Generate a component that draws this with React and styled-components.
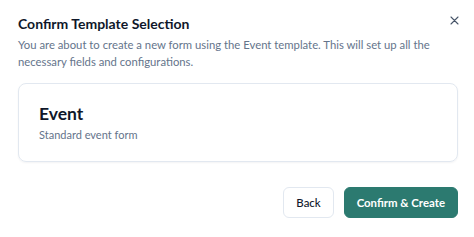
import React from 'react';
import styled, { createGlobalStyle } from 'styled-components';

const GlobalStyle = createGlobalStyle`
  body {
    margin: 0;
    background: #ffffff;
    font-family: Lato, 'Noto Sans', sans-serif;
  }
`;

const Dialog = styled.div`
  width: 474px;
  height: 237px;
  box-sizing: border-box;
  padding: 14px 16px 0 18px;
  display: flex;
  flex-direction: column;
`;

const Header = styled.div`
  display: flex;
  align-items: flex-start;
  justify-content: space-between;
`;

const Title = styled.h2`
  margin: 0;
  font-size: 14px;
  line-height: 20px;
  font-weight: 700;
  color: #0f172a;
`;

const CloseButton = styled.button`
  border: none;
  background: none;
  padding: 0;
  margin: 0 -2px 0 0;
  width: 12px;
  height: 12px;
  display: flex;
  align-items: center;
  justify-content: center;
  color: #475569;
  cursor: pointer;
`;

const Description = styled.p`
  margin: 2px 0 0;
  font-size: 11.3px;
  line-height: 17px;
  color: #64748b;
`;

const Card = styled.div`
  margin-top: 13px;
  height: 79px;
  box-sizing: border-box;
  border: 1px solid #e2e8f0;
  border-radius: 8px;
  box-shadow: 0 1px 2px rgba(15, 23, 42, 0.05);
  padding: 19px 20px;
`;

const CardTitle = styled.div`
  font-size: 17.5px;
  line-height: 22px;
  font-weight: 700;
  color: #0f172a;
`;

const CardText = styled.div`
  margin-top: 3px;
  font-size: 11px;
  line-height: 14px;
  color: #64748b;
`;

const Footer = styled.div`
  margin-top: 25px;
  display: flex;
  justify-content: flex-end;
  gap: 10px;
`;

const Button = styled.button`
  height: 31px;
  box-sizing: border-box;
  border-radius: 6px;
  padding: 0 12px;
  font-family: inherit;
  font-size: 11.4px;
  font-weight: ${(p) => (p.$primary ? 700 : 500)};
  border: 1px solid ${(p) => (p.$primary ? '#2c7a70' : '#e2e8f0')};
  background: ${(p) => (p.$primary ? '#2c7a70' : '#ffffff')};
  color: ${(p) => (p.$primary ? '#ffffff' : '#0f172a')};
  cursor: pointer;
`;

export default function App() {
  return (
    <>
      <GlobalStyle />
      <Dialog>
        <Header>
          <Title>Confirm Template Selection</Title>
          <CloseButton aria-label="Close">
            <svg width="9" height="9" viewBox="0 0 9 9" fill="none" stroke="currentColor" strokeWidth="1.1" strokeLinecap="round">
              <path d="M1 1l7 7M8 1L1 8" />
            </svg>
          </CloseButton>
        </Header>
        <Description>
          You are about to create a new form using the Event template. This will set up all the
          necessary fields and configurations.
        </Description>
        <Card>
          <CardTitle>Event</CardTitle>
          <CardText>Standard event form</CardText>
        </Card>
        <Footer>
          <Button>Back</Button>
          <Button $primary>Confirm &amp; Create</Button>
        </Footer>
      </Dialog>
    </>
  );
}
